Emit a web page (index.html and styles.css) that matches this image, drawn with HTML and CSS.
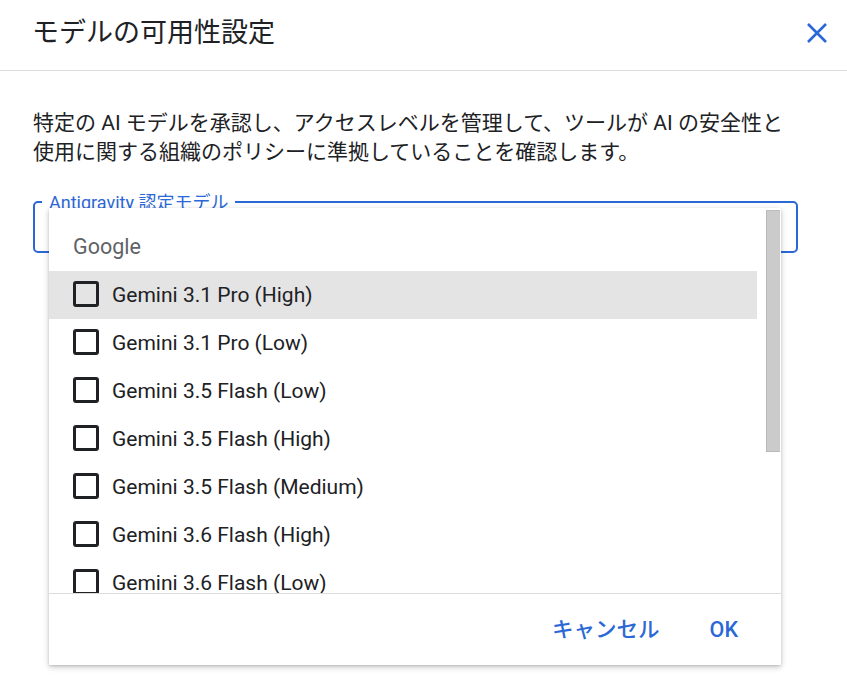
FILE: index.html
```html
<!DOCTYPE html>
<html lang="ja">
<head>
<meta charset="utf-8">
<title>モデルの可用性設定</title>
<link rel="stylesheet" href="styles.css">
</head>
<body>
<header class="dlg-head">
  <h1 class="dlg-title">モデルの可用性設定</h1>
  <button class="close-btn" aria-label="閉じる">
    <svg width="22" height="22" viewBox="0 0 22 22"><path d="M2 2L20 20M20 2L2 20" stroke="#2b68d6" stroke-width="2.6" fill="none"/></svg>
  </button>
</header>
<main class="dlg-body">
  <p class="desc">特定の AI モデルを承認し、アクセスレベルを管理して、ツールが AI の安全性と<br>使用に関する組織のポリシーに準拠していることを確認します。</p>
  <div class="field">
    <span class="field-label">Antigravity 認定モデル</span>
    <div class="menu">
      <div class="menu-scroll">
        <div class="menu-list">
          <div class="group-label">Google</div>
          <div class="opt active"><span class="box"></span><span class="opt-text">Gemini 3.1 Pro (High)</span></div>
          <div class="opt"><span class="box"></span><span class="opt-text">Gemini 3.1 Pro (Low)</span></div>
          <div class="opt"><span class="box"></span><span class="opt-text">Gemini 3.5 Flash (Low)</span></div>
          <div class="opt"><span class="box"></span><span class="opt-text">Gemini 3.5 Flash (High)</span></div>
          <div class="opt"><span class="box"></span><span class="opt-text">Gemini 3.5 Flash (Medium)</span></div>
          <div class="opt"><span class="box"></span><span class="opt-text">Gemini 3.6 Flash (High)</span></div>
          <div class="opt"><span class="box"></span><span class="opt-text">Gemini 3.6 Flash (Low)</span></div>
        </div>
        <div class="scrollbar"><div class="thumb"></div></div>
      </div>
      <div class="menu-foot">
        <button class="text-btn">キャンセル</button>
        <button class="text-btn">OK</button>
      </div>
    </div>
  </div>
</main>
</body>
</html>
```
FILE: styles.css
```css
html, body {
  margin: 0;
  padding: 0;
  background: #ffffff;
}
body {
  font-family: Roboto, "Noto Sans CJK JP", sans-serif;
  color: #202124;
  width: 847px;
  height: 682px;
  overflow: hidden;
}
.dlg-head {
  display: flex;
  align-items: center;
  justify-content: space-between;
  height: 38px;
  padding: 14px 19px 18px 32px;
  border-bottom: 1px solid #dcdcdc;
}
.dlg-title {
  margin: 0;
  font-size: 27px;
  font-weight: 400;
  line-height: 38px;
  color: #202124;
}
.close-btn {
  border: 0;
  background: none;
  padding: 0;
  width: 22px;
  height: 22px;
  display: flex;
}
.dlg-body {
  padding: 0 49px 0 33px;
}
.desc {
  margin: 38px 0 0 0;
  font-size: 21px;
  line-height: 29px;
  color: #202124;
}
.field {
  position: relative;
  margin-top: 34px;
  height: 48px;
  border: 2px solid #2b68d6;
  border-radius: 5px;
}
.field-label {
  position: absolute;
  left: 7px;
  top: -9px;
  padding: 0 7px;
  background: #ffffff;
  color: #2b68d6;
  font-size: 18px;
  line-height: 18px;
  white-space: nowrap;
}
.menu {
  position: absolute;
  left: 14px;
  top: 5px;
  width: 732px;
  height: 457px;
  background: #ffffff;
  box-shadow: 0 2px 6px rgba(0,0,0,0.22), 0 1px 2px rgba(0,0,0,0.12);
  display: flex;
  flex-direction: column;
  z-index: 2;
}
.menu-scroll {
  display: flex;
  height: 385px;
  overflow: hidden;
}
.menu-list {
  flex: 1;
  padding-top: 14px;
}
.group-label {
  height: 49px;
  padding-left: 24px;
  display: flex;
  align-items: center;
  font-size: 21.5px;
  color: #5f6368;
}
.opt {
  height: 48px;
  padding-left: 24px;
  display: flex;
  align-items: center;
  flex-shrink: 0;
}
.opt.active {
  background: #e4e4e4;
}
.box {
  width: 26px;
  height: 26px;
  box-sizing: border-box;
  border: 3px solid #202124;
  border-radius: 3px;
  margin-right: 13px;
  margin-top: -2px;
  flex-shrink: 0;
}
.opt-text {
  font-size: 21px;
  color: #202124;
  white-space: nowrap;
}
.scrollbar {
  width: 14px;
  padding: 2px 1px 0 9px;
}
.thumb {
  height: 242px;
  background: #cbcbcb;
  box-shadow: inset 1px 0 0 #b9b9b9, inset 0 -1px 0 #b9b9b9, inset 0 1px 0 #bdbdbd;
}
.menu-foot {
  flex: 1;
  border-top: 1px solid #dcdcdc;
  display: flex;
  align-items: center;
  justify-content: flex-end;
  gap: 26px;
  padding-right: 31px;
}
.text-btn {
  border: 0;
  background: none;
  padding: 8px 12px;
  font-family: Roboto, "Noto Sans CJK JP", sans-serif;
  font-size: 21.5px;
  font-weight: 500;
  color: #2b68d6;
  line-height: 24px;
}
```
